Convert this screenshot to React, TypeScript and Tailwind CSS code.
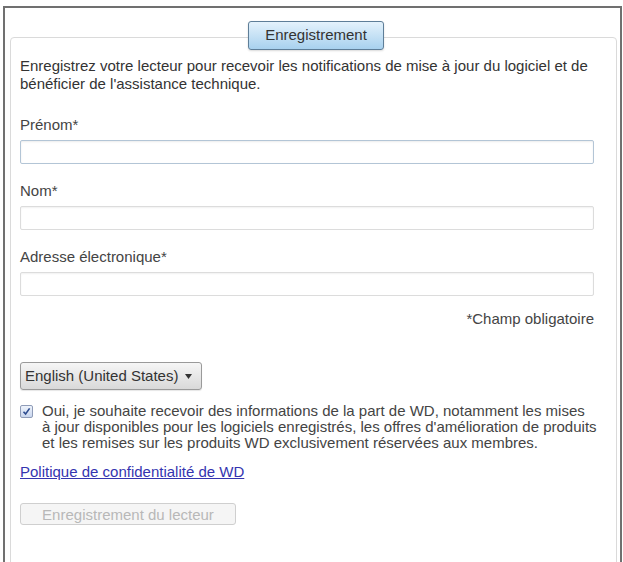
import React from "react";

const Field = ({ label, focused }: { label: string; focused?: boolean }) => (
  <div className="flex flex-col">
    <label className="leading-[18px] text-[#444]">{label}</label>
    <div
      className={
        focused
          ? "mt-[6px] h-[24px] w-full rounded-[2px] border border-[#b3c5d6] bg-white shadow-[inset_0_1px_2px_rgba(0,0,0,0.08)]"
          : "mt-[6px] h-[24px] w-full rounded-[2px] border border-[#dcdcdc] bg-white shadow-[inset_0_1px_2px_rgba(0,0,0,0.06)]"
      }
    />
  </div>
);

export default function App() {
  return (
    <div
      className="h-[562px] w-[623px] overflow-hidden bg-white pt-[6px] text-[15px] text-[#333]"
      style={{ fontFamily: '"Liberation Sans", Arial, sans-serif' }}
    >
      <div className="ml-[3px] h-[600px] w-[619px] border-x-2 border-t-2 border-[#707070]">
        <div className="pt-[13px]">
          {/* tab sitting on the panel's top edge */}
          <div className="relative z-10 -mb-[13px] ml-[243px] flex h-[29px] w-[136px] items-center justify-center rounded-[3px] border border-[#5e7e98] bg-gradient-to-b from-[#e4f2fc] to-[#a8d1ee] shadow-[0_1px_2px_rgba(0,0,0,0.15)]">
            <span className="text-[#333]">Enregistrement</span>
          </div>

          <div className="ml-[5px] h-[600px] w-[607px] rounded-[4px] border border-[#dadada] pl-[9px] pr-[22px] pt-[19px]">
            <p className="whitespace-nowrap leading-[18px]">
              Enregistrez votre lecteur pour recevoir les notifications de mise à jour du logiciel et de
              <br />
              bénéficier de l'assistance technique.
            </p>

            <div className="mt-[23px] flex flex-col gap-[18px]">
              <Field label="Prénom*" focused />
              <Field label="Nom*" />
              <Field label="Adresse électronique*" />
            </div>

            <div className="mt-[14px] text-right leading-[18px] text-[#444]">*Champ obligatoire</div>

            <div className="mt-[34px] flex h-[28px] w-[182px] items-center justify-between rounded-[3px] border border-[#9a9a9a] bg-gradient-to-b from-[#f6f6f6] to-[#d9d9d9] pl-[4px] pr-[9px] shadow-[0_1px_1px_rgba(0,0,0,0.1)]">
              <span className="whitespace-nowrap text-[#333]">English (United States)</span>
              <svg width="7" height="5" viewBox="0 0 7 5">
                <path d="M0 0 L7 0 L3.5 5 Z" fill="#333" />
              </svg>
            </div>

            <div className="mt-[13px] flex items-start gap-[9px]">
              <span className="mt-[2px] flex h-[13px] w-[13px] shrink-0 items-center justify-center rounded-[2px] border border-[#8f9cb8] bg-gradient-to-b from-[#eef3fb] to-[#c9d6ee]">
                <svg width="9" height="9" viewBox="0 0 9 9">
                  <path d="M1.5 4.8 L3.6 7 L7.6 1.4" fill="none" stroke="#2d4c8f" strokeWidth="1.6" />
                </svg>
              </span>
              <p className="whitespace-nowrap leading-[16px] text-[#444]">
                Oui, je souhaite recevoir des informations de la part de WD, notamment les mises
                <br />
                à jour disponibles pour les logiciels enregistrés, les offres d'amélioration de produits
                <br />
                et les remises sur les produits WD exclusivement réservées aux membres.
              </p>
            </div>

            <a href="#" className="mt-[12px] block w-fit leading-[18px] text-[#3434b0] underline">
              Politique de confidentialité de WD
            </a>

            <button
              disabled
              className="mt-[22px] h-[22px] w-[216px] rounded-[3px] border border-[#cfcfcf] bg-[#f5f5f5] text-[15px] text-[#b8b8b8]"
            >
              Enregistrement du lecteur
            </button>
          </div>
        </div>
      </div>
    </div>
  );
}
